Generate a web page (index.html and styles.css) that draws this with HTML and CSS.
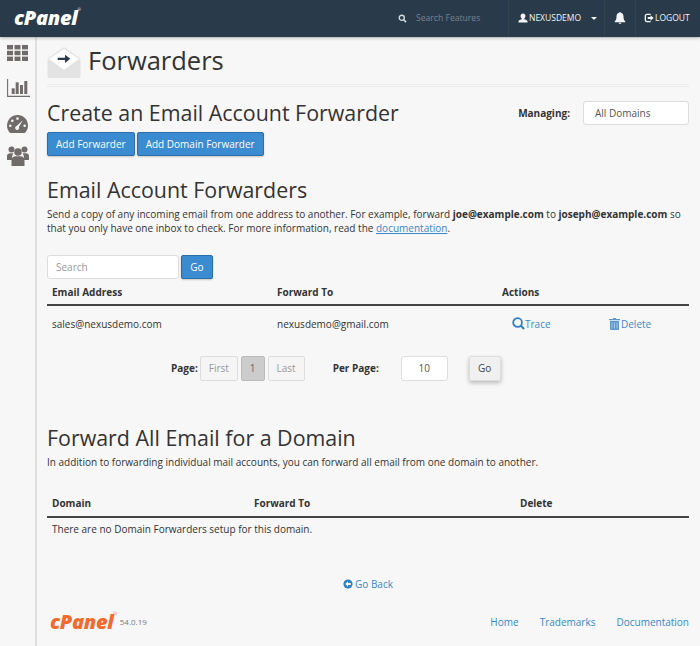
FILE: index.html
```html
<!DOCTYPE html>
<html lang="en">
<head>
<meta charset="utf-8">
<title>Forwarders</title>
<link rel="stylesheet" href="styles.css">
</head>
<body>
<header class="topbar">
  <span class="logo logo-white">cPanel<sup>®</sup></span>
  <div class="top-right">
    <div class="search">
      <svg class="i12" viewBox="0 0 12 12"><circle cx="5" cy="5" r="3.4" fill="none" stroke="#d5dade" stroke-width="1.8"/><path d="M7.6 7.6 10.8 10.8" stroke="#d5dade" stroke-width="2"/></svg>
      <span class="search-text">Search Features</span>
    </div>
    <div class="user">
      <svg class="i11" viewBox="0 0 12 12"><path d="M6 .5c1.8 0 2.9 1.3 2.9 3.1 0 1.400-.7 2.600-1.500 3.100v.9c1.300.5 4 .9 4 2.300V11.500H.6V9.900c0-1.400 2.700-1.800 4-2.300v-.9C3.800 6.200 3.100 5 3.100 3.600 3.100 1.800 4.200.5 6 .5z" fill="#f2f4f5"/></svg>
      <span>NEXUSDEMO</span>
      <span class="caret"></span>
    </div>
    <div class="bell">
      <svg class="i12" viewBox="0 0 12 12"><path d="M6 0c.5 0 .8.3.8.8 1.900.4 2.700 1.900 2.700 3.700 0 3 .9 4 1.800 4.900v.8H.7v-.8c.9-.9 1.800-1.900 1.800-4.900 0-1.800.8-3.300 2.700-3.700C5.200.3 5.500 0 6 0zM4.600 10.800h2.800C7.300 11.500 6.700 12 6 12s-1.300-.5-1.400-1.200z" fill="#f2f4f5"/></svg>
    </div>
    <div class="logout">
      <svg class="i11" viewBox="0 0 12 12"><path d="M8 2.400V1H3.500C1.800 1 .8 2.200.8 3.800v4.400C.8 9.800 1.800 11 3.500 11H8V9.600H3.700c-.8 0-1.300-.6-1.300-1.400V3.800c0-.8.500-1.400 1.300-1.400z" fill="#f2f4f5"/><path d="M4.500 4.800h3.300V2.800L11.600 6 7.800 9.200V7.200H4.500z" fill="#f2f4f5"/></svg>
      <span>LOGOUT</span>
    </div>
  </div>
</header>
<div class="shell">
  <nav class="side">
    <svg class="nav-grid" viewBox="0 0 21 16"><g fill="#706c6c"><rect width="6" height="4.400"/><rect x="7.500" width="6" height="4.400"/><rect x="15" width="6" height="4.400"/><rect y="5.800" width="6" height="4.400"/><rect x="7.500" y="5.800" width="6" height="4.400"/><rect x="15" y="5.800" width="6" height="4.400"/><rect y="11.600" width="6" height="4.400"/><rect x="7.500" y="11.600" width="6" height="4.400"/><rect x="15" y="11.600" width="6" height="4.400"/></g></svg>
    <svg class="nav-chart" viewBox="0 0 23 18"><path d="M.6 0v17.400H23" fill="none" stroke="#706c6c" stroke-width="1.100"/><g fill="#706c6c"><rect x="4.700" y="9.300" width="3" height="5.700"/><rect x="8.700" y="3.300" width="3" height="11.700"/><rect x="13" y="6" width="3" height="9"/><rect x="17.300" y="2" width="3" height="13"/></g></svg>
    <svg class="nav-gauge" viewBox="0 0 21 18"><path d="M10.500 0C4.700 0 0 4.700 0 10.500c0 3 1.200 5.600 3.200 7.500h14.600c2-1.900 3.200-4.500 3.200-7.500C21 4.700 16.300 0 10.500 0z" fill="#706c6c"/><g fill="#f7f7f7"><circle cx="10.500" cy="3.600" r="1.300"/><circle cx="5.300" cy="5.800" r="1.300"/><circle cx="3.300" cy="10.800" r="1.300"/><circle cx="17.700" cy="10.800" r="1.300"/><path d="M15.800 5.200 11.900 12a2 2 0 1 1-2.300-.9z"/></g></svg>
    <svg class="nav-users" viewBox="0 0 22 20"><g fill="#706c6c"><circle cx="4.500" cy="3.500" r="3"/><circle cx="17.500" cy="3.500" r="3"/><path d="M0 14v-4c0-2 1.500-2.800 3-2.800h3.500C5.500 8.500 5 10 5 12v2z"/><path d="M22 14v-4c0-2-1.500-2.800-3-2.800h-3.500c1 1.300 1.500 2.800 1.500 4.800v2z"/><circle cx="11" cy="6" r="3.800"/><path d="M4.500 20v-5.500c0-3 2-4.200 3.800-4.200h5.400c1.800 0 3.800 1.200 3.800 4.200V20z"/></g></svg>
  </nav>
  <main class="content">
    <div class="page-head">
      <svg class="env" viewBox="0 0 34 32"><path d="M0 12 17 0l17 12v18a2 2 0 0 1-2 2H2a2 2 0 0 1-2-2z" fill="#e3e3e3"/><path d="M1.500 12.500 17 2l15.500 10.500L17 23.500z" fill="#fff"/><path d="M10.500 11h7.500V8l5.500 4.200-5.500 4.200v-3h-7.500z" fill="#293a4a"/></svg>
      <h1>Forwarders</h1>
    </div>
    <div class="create-row">
      <div>
        <h2 class="h-create">Create an Email Account Forwarder</h2>
        <div class="btn-row">
          <a class="btn btn-blue">Add Forwarder</a>
          <a class="btn btn-blue">Add Domain Forwarder</a>
        </div>
      </div>
      <div class="managing">
        <b>Managing:</b>
        <div class="select">All Domains</div>
      </div>
    </div>
    <h2 class="h-accounts">Email Account Forwarders</h2>
    <p class="lead">Send a copy of any incoming email from one address to another. For example, forward <b>joe@example.com</b> to <b>joseph@example.com</b> so that you only have one inbox to check. For more information, read the <a class="link under">documentation</a>.</p>
    <div class="search-row">
      <div class="input">Search</div>
      <a class="btn btn-blue btn-go">Go</a>
    </div>
    <div class="tbl tbl-a tbl-head">
      <b>Email Address</b><b>Forward To</b><b>Actions</b>
    </div>
    <div class="tbl tbl-a tbl-body">
      <span>sales@nexusdemo.com</span>
      <span>nexusdemo@gmail.com</span>
      <div class="actions">
        <a class="link act act-trace"><svg class="i14" viewBox="0 0 14 14"><circle cx="6" cy="6" r="4.700" fill="none" stroke="#2f7fc4" stroke-width="1.900"/><path d="M9.400 9.400 13 13" stroke="#2f7fc4" stroke-width="2.200"/></svg>Trace</a>
        <a class="link act act-del"><svg class="i11h" viewBox="0 0 11 12"><path d="M3.800 1 4.300 0h2.400l.5 1H11v1.200H0V1zM1 3h9v8c0 .6-.4 1-1 1H2c-.6 0-1-.4-1-1z" fill="#5b97cf"/><path d="M3 4.500v6M5.500 4.500v6M8 4.500v6" stroke="#cfe0f0" stroke-width=".7"/></svg>Delete</a>
      </div>
    </div>
    <div class="pager">
      <b class="pg-label">Page:</b>
      <span class="pg">First</span>
      <span class="pg pg-on">1</span>
      <span class="pg">Last</span>
      <b class="per-label">Per Page:</b>
      <div class="per-input">10</div>
      <a class="btn btn-gray">Go</a>
    </div>
    <h2 class="h-domain">Forward All Email for a Domain</h2>
    <p class="lead lead-short">In addition to forwarding individual mail accounts, you can forward all email from one domain to another.</p>
    <div class="tbl tbl-b tbl-head">
      <b>Domain</b><b>Forward To</b><b>Delete</b>
    </div>
    <div class="empty">There are no Domain Forwarders setup for this domain.</div>
    <div class="back">
      <a class="link"><svg class="i11" viewBox="0 0 12 12"><circle cx="6" cy="6" r="5.500" fill="#2f7fc4"/><path d="M2.700 6 6 2.800v2.100h3.400v2.200H6v2.100z" fill="#f7f7f7"/></svg>Go Back</a>
    </div>
    <footer class="foot">
      <div class="foot-left"><span class="logo logo-orange">cPanel<sup>®</sup></span><span class="ver">54.0.19</span></div>
      <div class="foot-links"><a class="link">Home</a><a class="link">Trademarks</a><a class="link">Documentation</a></div>
    </footer>
  </main>
</div>
</body>
</html>
```
FILE: styles.css
```css
* { box-sizing: border-box; }
html, body { margin: 0; padding: 0; }
body { width: 700px; height: 646px; overflow: hidden; background: #f7f7f7; font-family: "Open Sans", sans-serif; font-size: 10px; line-height: 16px; color: #333; }
svg { display: block; flex: none; }
.topbar { height: 37px; background: #293a4a; border-bottom: 1px solid #2a3a48; box-shadow: 0 1px 3px rgba(0,0,0,.3); display: flex; justify-content: space-between; align-items: center; padding-left: 14px; position: relative; color: #f2f4f5; }
.logo { font-family: "Open Sans", sans-serif; font-weight: 800; font-style: italic; letter-spacing: -.3px; line-height: 1; white-space: nowrap; }
.logo sup { font-size: 4px; font-weight: 400; vertical-align: top; line-height: 1; letter-spacing: 0; }
.logo-white { font-size: 20px; color: #fff; }
.logo-orange { font-size: 20px; color: #f26a2e; }
.top-right { display: flex; height: 100%; align-items: center; font-size: 8.500px; }
.i12 { width: 10px; height: 10px; }
.i11 { width: 10px; height: 10px; }
.search { display: flex; align-items: center; gap: 9px; width: 128px; padding-left: 18px; height: 100%; }
.search .i12 { width: 9px; height: 9px; }
.search-text { color: #77838e; font-size: 8.600px; white-space: nowrap; }
.user { display: flex; align-items: center; gap: 1px; height: 100%; width: 96px; padding-left: 9px; border-left: 1px solid #33444f; white-space: nowrap; }
.caret { width: 0; height: 0; border-left: 3.500px solid transparent; border-right: 3.500px solid transparent; border-top: 3.500px solid #f2f4f5; margin-left: 9px; }
.bell { height: 100%; width: 32px; display: flex; align-items: center; justify-content: center; border-left: 1px solid #33444f; border-right: 1px solid #33444f; }
.bell .i12 { width: 12px; height: 12px; }
.logout { height: 100%; width: 64px; display: flex; align-items: center; gap: 1px; padding-left: 8px; white-space: nowrap; }
.shell { display: flex; height: 609px; }
.side { width: 37px; flex: none; border-right: 2px solid #e0e0e0; display: flex; flex-direction: column; padding: 8px 0 0 7px; background: #f7f7f7; }
.nav-grid { width: 21px; height: 16px; }
.nav-chart { width: 23px; height: 18px; margin-top: 18px; }
.nav-gauge { width: 21px; height: 18px; margin-top: 18px; }
.nav-users { width: 22px; height: 20px; margin-top: 13px; }
.content { flex: 1; min-width: 0; padding: 0 11px 0 10px; }
.page-head { display: flex; align-items: flex-start; height: 50px; padding-top: 10px; border-bottom: 3px double #ececec; gap: 7px; }
.env { width: 34px; height: 31px; }
h1 { margin: 0; font-size: 25.500px; font-weight: 400; line-height: 26px; color: #333; }
h2 { margin: 0; font-weight: 400; font-size: 21.400px; line-height: 26px; color: #333; }
.create-row { display: flex; justify-content: space-between; padding-top: 13px; }
.btn-row { display: flex; gap: 2px; margin-top: 6px; }
.btn { display: flex; align-items: center; justify-content: center; height: 24px; font-size: 10px; border-radius: 2px; white-space: nowrap; }
.btn-blue { background: #3a8bd0; border: 1px solid #2b6ea8; color: #fff; padding: 0 8px; box-shadow: 0 1px 2px rgba(0,0,0,.2); }
.btn-go { width: 32px; padding: 0; }
.managing { display: flex; align-items: center; align-self: flex-start; gap: 13px; margin-top: 1px; }
.managing b { color: #333; }
.select { width: 106px; height: 24px; padding-left: 11px; background: #fff; border: 1px solid #ddd; border-radius: 3px; display: flex; align-items: center; color: #555; }
.h-accounts { margin-top: 21px; }
.lead { margin: 4px 0 0; font-size: 10px; line-height: 14px; color: #333; }
.link { color: #3a87c8; display: inline-flex; align-items: center; white-space: nowrap; }
.lead .link { display: inline; }
.under { text-decoration: underline; }
.search-row { display: flex; gap: 2px; margin-top: 20px; }
.input { width: 132px; height: 24px; background: #fff; border: 1px solid #ddd; border-radius: 3px; display: flex; align-items: center; padding-left: 8px; color: #999; }
.tbl { display: grid; align-items: center; padding-left: 5px; }
.tbl-a { grid-template-columns: 225px 225px 1fr; }
.tbl-b { grid-template-columns: 202px 266px 1fr; }
.tbl-head { height: 27px; border-bottom: 2px solid #444; padding-top: 0; }
.tbl-head b { color: #333; font-weight: 700; }
.tbl-body { height: 35px; }
.actions { display: flex; }
.act { gap: 0; }
.act-trace { margin-left: 10px; width: 97px; }
.i14 { width: 13px; height: 13px; }
.i11h { width: 11px; height: 12px; margin-right: 1px; }
.pager { display: flex; align-items: center; margin-top: 14px; height: 26px; padding-left: 124px; }
.pg-label { margin-right: 2px; }
.pg { height: 25px; display: flex; align-items: center; padding: 0 8px; border: 1px solid #ddd; border-radius: 2px; margin-right: 3px; color: #999; background: #f5f5f5; }
.pg-on { background: #ccc; color: #666; border-color: #bbb; padding: 0 8px; }
.per-label { margin-left: 25px; }
.per-input { width: 47px; height: 25px; margin-left: 22px; background: #fff; border: 1px solid #ddd; border-radius: 3px; display: flex; align-items: center; justify-content: center; color: #555; }
.btn-gray { width: 32px; height: 25px; margin-left: 21px; background: #f0f0f0; border: 1px solid #ddd; box-shadow: 0 2px 4px rgba(0,0,0,.25); color: #444; }
.h-domain { margin-top: 44px; }
.lead-short { margin-top: 4px; }
.tbl-b.tbl-head { margin-top: 21px; height: 28px; }
.empty { padding: 3px 0 0 5px; }
.back { display: flex; justify-content: center; margin-top: 39px; }
.back .i11 { margin-right: 2px; }
.foot { display: flex; justify-content: space-between; align-items: center; margin-top: 20px; }
.foot-left { display: flex; align-items: center; gap: 3px; padding-left: 3px; }
.ver { font-size: 8px; color: #777; }
.foot-links { display: flex; gap: 21px; }
```
